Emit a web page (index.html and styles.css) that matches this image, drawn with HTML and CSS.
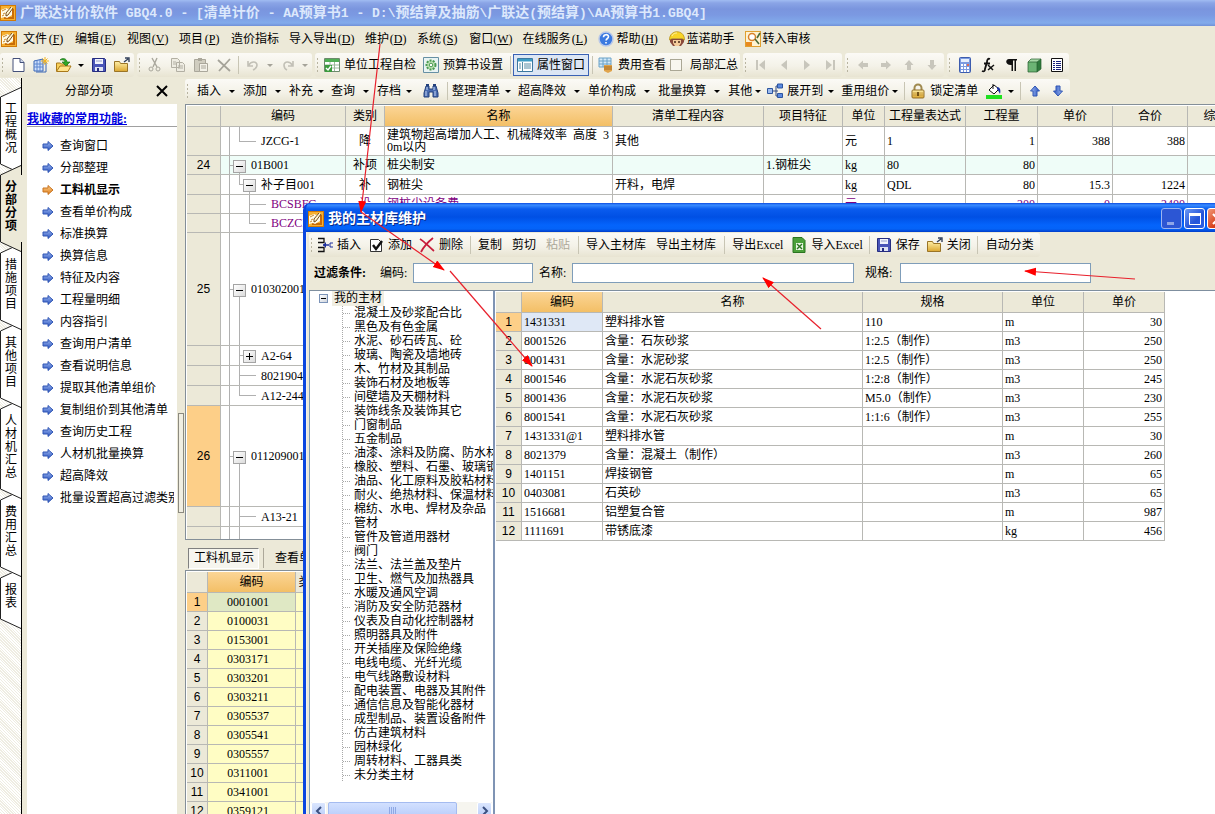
FILE: index.html
```html
<!DOCTYPE html>
<html lang="zh-CN">
<head>
<meta charset="utf-8">
<title>广联达计价软件 GBQ4.0</title>
<link rel="stylesheet" href="styles.css">
</head>
<body>
<svg class="defs" aria-hidden="true">
  <defs>
    <linearGradient id="gBlue" x1="0" y1="0" x2="0" y2="1"><stop offset="0" stop-color="#9db8f0"/><stop offset="1" stop-color="#2c55c0"/></linearGradient>
    <linearGradient id="gOrange" x1="0" y1="0" x2="0" y2="1"><stop offset="0" stop-color="#ffd08a"/><stop offset="1" stop-color="#dd7a1a"/></linearGradient>
    <linearGradient id="gGold" x1="0" y1="0" x2="0" y2="1"><stop offset="0" stop-color="#fff0a8"/><stop offset="1" stop-color="#dba630"/></linearGradient>
  </defs>
  <symbol id="logo" viewBox="0 0 16 16"><rect width="16" height="16" fill="#d07a08"/><rect x="1" y="1" width="14" height="14" fill="#f7b030"/><path d="M12 4h2v10H4v-2h8z" fill="#c86c08"/><path d="M1 5l5-2 2 1 4-2v8l-5 3-2-1-4 1z" fill="#fffbe8"/><path d="M2 6l4-2M3 9l2-1M2 11l2-1" stroke="#c88a30" fill="none"/><path d="M11 2L6 8v3l2-1 5-7" fill="#fff6d0" stroke="#6a3a08" stroke-width=".9"/></symbol>
  <symbol id="new" viewBox="0 0 16 16"><path d="M3 1.500h7l4 4v9H3z" fill="#fff" stroke="#44507a"/><path d="M10 1.500v4h4" fill="#cfd8ee" stroke="#44507a"/></symbol>
  <symbol id="newgrid" viewBox="0 0 16 16"><path d="M1 4l9-2v12H1z" fill="#cfe0fb" stroke="#3b66b5"/><path d="M11 6h2v9H3" fill="none" stroke="#3b66b5"/><path d="M1 7h9M1 10h9M4 3v11M7 3v11" stroke="#5c86cf"/><path d="M12 0v8M8 4h8M9.500 1.500l5 5M14.500 1.500l-5 5" stroke="#f4b41c"/></symbol>
  <symbol id="open" viewBox="0 0 16 16"><path d="M0.500 14V6h4l1 1h6v3" fill="#f7cf5a" stroke="#a8781a"/><path d="M.5 14.500L4 9h11l-3 5.500z" fill="#ffe28a" stroke="#a8781a"/><path d="M4 3c3-3 7-1 7 2h3l-4 4-4-4h3C9 4 7 2 4 3z" fill="#30a828" stroke="#136a12" stroke-width=".6"/></symbol>
  <symbol id="save" viewBox="0 0 16 16"><path d="M1.500 1.500h12l1 1v12h-13z" fill="#4a55b8" stroke="#252c80"/><path d="M4 2h8v5H4z" fill="#f2f4fd"/><path d="M5 4h6" stroke="#9aa2cc"/><path d="M4 10h8v4H4z" fill="#dfe3f3"/><path d="M6 11h2v3H6z" fill="#252c80"/></symbol>
  <symbol id="folder" viewBox="0 0 16 16"><path d="M.5 4.500h5l1 2h7v8H.5z" fill="url(#gGold)" stroke="#9a7426"/><path d="M10 5l4-3M11 1h4v4" stroke="#33415c" fill="none" stroke-width="1.400"/></symbol>
  <symbol id="cut" viewBox="0 0 16 16"><path d="M5 1l5 9M10 1L6 10" stroke="#a9a79c" stroke-width="1.400"/><circle cx="4" cy="12" r="2" fill="none" stroke="#a9a79c"/><circle cx="11" cy="12" r="2" fill="none" stroke="#a9a79c"/></symbol>
  <symbol id="copy" viewBox="0 0 16 16"><path d="M1.500 1.500h6l2 2v7h-8zM6.500 5.500h6l2 2v7h-8z" fill="#eeece2" stroke="#b2afa3"/><path d="M8 9h5M8 11h5M3 5h3M3 7h3" stroke="#b2afa3"/></symbol>
  <symbol id="paste" viewBox="0 0 16 16"><path d="M1.500 2.500h11v12h-11z" fill="#d0cdc0" stroke="#aaa79b"/><path d="M5 1h4v3H5z" fill="#aaa79b"/><path d="M6.500 6.500h8v8h-8z" fill="#f3f1e8" stroke="#aaa79b"/><path d="M8 9h5M8 11h5" stroke="#aaa79b"/></symbol>
  <symbol id="delgray" viewBox="0 0 16 16"><path d="M2 3l12 11M14 2L3 14" stroke="#a5a399" stroke-width="1.800"/></symbol>
  <symbol id="undo" viewBox="0 0 16 16"><path d="M3 4v5h5M3.500 8.500C6 4 12 4 12 8c0 3-2 4-4 5" fill="none" stroke="#c2c0b6" stroke-width="1.600"/></symbol>
  <symbol id="redo" viewBox="0 0 16 16"><path d="M13 4v5H8M12.500 8.500C10 4 4 4 4 8c0 3 1 4 3 5" fill="none" stroke="#c2c0b6" stroke-width="1.600"/></symbol>
  <symbol id="check" viewBox="0 0 16 16"><path d="M.5 1.500h15v13H.5z" fill="#fff" stroke="#6c8a6c"/><path d="M1 2h14v3H1z" fill="#4fae54"/><path d="M6 5v9M10.500 5v9M1 8h14M1 11h14" stroke="#9bb79b"/><path d="M1 8h7v7H1z" fill="#3b9b3e"/><path d="M2 11l2 2 3-4" stroke="#fff" fill="none" stroke-width="1.400"/></symbol>
  <symbol id="gear" viewBox="0 0 16 16"><path d="M.5 .5h15v15H.5z" fill="#e9f3f3" stroke="#6690a4"/><circle cx="8" cy="8" r="4.500" fill="#bfe2b4" stroke="#4a9a52" stroke-width="2" stroke-dasharray="2 1.200"/><circle cx="8" cy="8" r="1.800" fill="#fff" stroke="#4a9a52"/></symbol>
  <symbol id="props" viewBox="0 0 16 16"><path d="M.5 1.500h15v13H.5z" fill="#fff" stroke="#3c78a0"/><path d="M1 2h14v2.500H1z" fill="#3c9cc4"/><path d="M5.500 5v9M2 7h2M2 9h2M2 11h2M7 7h7M7 9h7M7 11h7" stroke="#568ca4"/></symbol>
  <symbol id="fee" viewBox="0 0 16 16"><path d="M1 1h12v9H1z" fill="#d3e9f8" stroke="#6aa2c8"/><path d="M1 4h12M1 7h12M5 1v9M9 1v9" stroke="#6aa2c8"/><path d="M6 8h8v6l-4 2-4-2z" fill="#e0a44c"/><path d="M6 10h8M6 12h8" stroke="#a86c20"/></symbol>
  <symbol id="first" viewBox="0 0 16 16"><path d="M4 3v10" stroke="#c8c6bc" stroke-width="2"/><path d="M12 3v10L6 8z" fill="#c8c6bc"/></symbol>
  <symbol id="prev" viewBox="0 0 16 16"><path d="M11 3v10L5 8z" fill="#c8c6bc"/></symbol>
  <symbol id="next" viewBox="0 0 16 16"><path d="M5 3v10l6-5z" fill="#c8c6bc"/></symbol>
  <symbol id="last" viewBox="0 0 16 16"><path d="M12 3v10" stroke="#c8c6bc" stroke-width="2"/><path d="M4 3v10l6-5z" fill="#c8c6bc"/></symbol>
  <symbol id="arr" viewBox="0 0 16 16"><path d="M3 6h5V3.500l5 4.500-5 4.500V10H3z"/></symbol>
  <symbol id="calc" viewBox="0 0 16 16"><rect x="2.500" y=".5" width="11" height="15" rx="1" fill="#7c9be0" stroke="#3c5cae"/><path d="M4 2h8v3H4z" fill="#e6effc"/><path d="M4 8h8M4 11h8M4 14h8" stroke="#fff" stroke-width="2" stroke-dasharray="2 1"/><path d="M10 8h2" stroke="#e06a50" stroke-width="2"/></symbol>
  <symbol id="fx" viewBox="0 0 16 16"><path d="M10 2c-2-1-3 1-3 3L5 12c0 2-1 3-3 2M4 6.500h6" fill="none" stroke="#111" stroke-width="1.800"/><path d="M8 8l5 5M14 8l-6 5" stroke="#111" stroke-width="1.500"/></symbol>
  <symbol id="para" viewBox="0 0 16 16"><path d="M6 2h8v1.500h-1V14h-1.500V3.500H10V14H8.500V8C2 8.500 2 2 6 2z" fill="#111"/></symbol>
  <symbol id="cube" viewBox="0 0 16 16"><path d="M2 5h9v10H2z" fill="#6cb474"/><path d="M2 5l3-3h10l-4 3z" fill="#a6d8a6"/><path d="M11 5l4-3v10l-4 3z" fill="#2f7a3c"/><path d="M2 5l3-3h10v10l-4 3H2zM2 5h9v10M11 5l4-3" fill="none" stroke="#235c2c" stroke-width=".7"/></symbol>
  <symbol id="list" viewBox="0 0 16 16"><path d="M2.500 1.500h11v13h-11z" fill="#fff" stroke="#111"/><path d="M4 4.500h2M7 4.500h5M4 6.500h2M7 6.500h5M4 8.500h2M7 8.500h5M4 10.500h2M7 10.500h5M4 12.500h2M7 12.500h5" stroke="#1a237e"/></symbol>
  <symbol id="bino" viewBox="0 0 16 16"><path d="M3 3h3v3h4V3h3l2 7v4h-5v-5H6v5H1v-4z" fill="#4a6cb0" stroke="#23407c"/><path d="M3 8v5M12 8v5M4 4v3M11 4v3" stroke="#c4d4f2"/><path d="M3 1h3v2H3zM10 1h3v2h-3z" fill="#23407c"/></symbol>
  <symbol id="tree" viewBox="0 0 16 16"><path d="M6 8h3M9 3v10M9 3h2M9 13h2M9 8h2" stroke="#334a80" fill="none"/><path d="M.5 5.500h5v5h-5z" fill="#9dbbee" stroke="#2c55a0"/><path d="M10.500 1h5v4h-5zM10.500 10.500h5v4h-5z" fill="#5c8ae0" stroke="#2c55a0"/></symbol>
  <symbol id="lock" viewBox="0 0 16 16"><path d="M4.500 8V5a3.500 3.500 0 0 1 7 0v3" fill="none" stroke="#a08a50" stroke-width="2"/><rect x="2" y="7" width="12" height="8" rx="1" fill="url(#gGold)" stroke="#94702a"/><path d="M3 10h10M3 12h10" stroke="#b8862a" stroke-width=".7"/><path d="M8 9v4" stroke="#5a3a08" stroke-width="1.600"/></symbol>
  <symbol id="bucket" viewBox="0 0 16 16"><path d="M3 7l5-5 5 4-5 5z" fill="#fff" stroke="#111"/><path d="M7 1v5" stroke="#111"/><path d="M11 4c3 0 4 3 3 7-1-2-2-4-3-5z" fill="#1a2f9e"/><path d="M0 12h16v4H0z" fill="#1fe01f"/></symbol>
  <symbol id="help" viewBox="0 0 16 16"><circle cx="8" cy="8" r="7" fill="#3c7ae0" stroke="#b9c8e8" stroke-width="1.500"/><path d="M5.500 6.200c0-3.400 5-3.200 5-.4 0 1.800-2.400 1.600-2.400 3.700M8 11v1.500" fill="none" stroke="#fff" stroke-width="1.600"/></symbol>
  <symbol id="face" viewBox="0 0 16 16"><path d="M1 8h14v3l-3 4H4l-3-4z" fill="#8a4a3c"/><path d="M4 9h8v3l-2 3H6l-2-3z" fill="#f4cc9c"/><path d="M6 10v2M10 10v2" stroke="#3a1a10" stroke-width="1.400"/><path d="M.5 9C0-2 16-2 15.500 9L13 7.500H3z" fill="#f8d428" stroke="#b08a10" stroke-width=".7"/><path d="M3 5c1-3 4-3 5-3" stroke="#fff4a8" fill="none"/></symbol>
  <symbol id="audit" viewBox="0 0 16 16"><rect x=".5" y=".5" width="15" height="15" fill="#fff3d2" stroke="#e0a030"/><path d="M1 11h6v4H1z" fill="#e88a20"/><circle cx="7" cy="6" r="3.500" fill="#fff" stroke="#d8822c" stroke-width="1.500"/><path d="M10 8l4 5M15 2l-3 5" stroke="#4a6a3a" stroke-width="1.600"/></symbol>
  <symbol id="insert" viewBox="0 0 16 16"><path d="M1 1.500h6v4H1M1 10.500h6v4H1" fill="none" stroke="#111" stroke-width="1.300"/><path d="M6 8h6" stroke="#1c2f9e" stroke-width="1.500"/><path d="M9 5v6L6 8z" fill="#1c2f9e"/><path d="M16 6h-3v4h3" fill="none" stroke="#1c2f9e"/></symbol>
  <symbol id="tick" viewBox="0 0 16 16"><path d="M2.500 2.500h8l3 3v9h-11z" fill="#fff" stroke="#333"/><path d="M5 8l3 4 6-8" fill="none" stroke="#111" stroke-width="2.400"/></symbol>
  <symbol id="del" viewBox="0 0 16 16"><path d="M1 2c5 3 9 8 14 12M14 1C9 5 5 9 2 15" fill="none" stroke="#c81e3c" stroke-width="1.800"/></symbol>
  <symbol id="excel" viewBox="0 0 16 16"><path d="M2 .5h9l3 3v12H2z" fill="#4ba03a" stroke="#2a7420"/><path d="M5 6h7v7H5z" fill="#eaf6e4"/><path d="M6 7l5 5M11 7l-5 5" stroke="#2a7420" stroke-width="1.400"/></symbol>
  <symbol id="tabtop" viewBox="0 0 22 10"><path d="M0 10L21 0v10z"/><path d="M.5 10L21 .5" fill="none" stroke="#222"/></symbol>
  <symbol id="tabbot" viewBox="0 0 22 10"><path d="M0 0h21v10z"/><path d="M.5 0L21 9.500" fill="none" stroke="#222"/></symbol>
</svg>

<div class="app">
  <header class="titlebar"><svg class="ic"><use href="#logo"/></svg><h1>广联达计价软件<i> GBQ4.0 - [</i>清单计价<i> - AA</i>预算书<i>1 - D:\</i>预结算及抽筋<i>\</i>广联达<i>(</i>预结算<i>)\AA</i>预算书<i>1.GBQ4]</i></h1></header>

  <nav class="menubar">
    <svg class="ic"><use href="#logo"/></svg>
    <button>文件<span class="key">(<u>F</u>)</span></button><button>编辑<span class="key">(<u>E</u>)</span></button><button>视图<span class="key">(<u>V</u>)</span></button><button>项目<span class="key">(<u>P</u>)</span></button><button>造价指标</button><button>导入导出<span class="key">(<u>D</u>)</span></button><button>维护<span class="key">(<u>D</u>)</span></button><button>系统<span class="key">(<u>S</u>)</span></button><button>窗口<span class="key">(<u>W</u>)</span></button><button>在线服务<span class="key">(<u>L</u>)</span></button><button><svg class="ic"><use href="#help"/></svg>帮助<span class="key">(<u>H</u>)</span></button><button><svg class="ic"><use href="#face"/></svg>蓝诺助手</button><button><svg class="ic"><use href="#audit"/></svg>转入审核</button>
  </nav>

  <div class="tools">
    <div class="band"><span class="grip"></span><button class="tb" aria-label="新建"><svg class="ic"><use href="#new"/></svg></button><button class="tb" aria-label="新建表"><svg class="ic"><use href="#newgrid"/></svg></button><button class="tb" aria-label="打开"><svg class="ic"><use href="#open"/></svg></button><span class="caret"></span><button class="tb" aria-label="保存"><svg class="ic"><use href="#save"/></svg></button><button class="tb" aria-label="关闭工程"><svg class="ic"><use href="#folder"/></svg></button></div>
    <div class="band"><span class="grip"></span><button class="tb" aria-label="剪切"><svg class="ic"><use href="#cut"/></svg></button><button class="tb" aria-label="复制"><svg class="ic"><use href="#copy"/></svg></button><button class="tb" aria-label="粘贴"><svg class="ic"><use href="#paste"/></svg></button><button class="tb" aria-label="删除"><svg class="ic"><use href="#delgray"/></svg></button><span class="sep"></span><button class="tb" aria-label="撤销"><svg class="ic"><use href="#undo"/></svg></button><span class="caret dim"></span><button class="tb" aria-label="恢复"><svg class="ic"><use href="#redo"/></svg></button><span class="caret dim"></span></div>
    <div class="band"><span class="grip"></span><button class="tb label"><svg class="ic"><use href="#check"/></svg>单位工程自检</button><button class="tb label"><svg class="ic"><use href="#gear"/></svg>预算书设置</button><span class="sep"></span><button class="tb label pressed"><svg class="ic"><use href="#props"/></svg>属性窗口</button><span class="sep"></span><button class="tb label"><svg class="ic"><use href="#fee"/></svg>费用查看</button><label class="tick"><input type="checkbox">局部汇总</label></div>
    <div class="band"><span class="grip"></span><button class="tb" aria-label="首项"><svg class="ic"><use href="#first"/></svg></button><button class="tb" aria-label="上一项"><svg class="ic"><use href="#prev"/></svg></button><button class="tb" aria-label="下一项"><svg class="ic"><use href="#next"/></svg></button><button class="tb" aria-label="末项"><svg class="ic"><use href="#last"/></svg></button></div>
    <div class="band"><span class="grip"></span><button class="tb" aria-label="左移"><svg class="ic gray left"><use href="#arr"/></svg></button><button class="tb" aria-label="右移"><svg class="ic gray"><use href="#arr"/></svg></button><button class="tb" aria-label="上移"><svg class="ic gray up"><use href="#arr"/></svg></button><button class="tb" aria-label="下移"><svg class="ic gray down"><use href="#arr"/></svg></button></div>
    <div class="band"><span class="grip"></span><button class="tb" aria-label="计算器"><svg class="ic"><use href="#calc"/></svg></button><button class="tb" aria-label="函数"><svg class="ic"><use href="#fx"/></svg></button><button class="tb" aria-label="特殊符号"><svg class="ic"><use href="#para"/></svg></button><button class="tb" aria-label="图元"><svg class="ic"><use href="#cube"/></svg></button><button class="tb" aria-label="列表"><svg class="ic"><use href="#list"/></svg></button></div>
  </div>

  <div class="workspace">
    <div class="tabs">
      <button class="tab"><svg><use href="#tabtop"/></svg><span>工程概况</span><svg><use href="#tabbot"/></svg></button>
      <button class="tab on"><svg><use href="#tabtop"/></svg><span>分部分项</span><svg><use href="#tabbot"/></svg></button>
      <button class="tab z5"><svg><use href="#tabtop"/></svg><span>措施项目</span><svg><use href="#tabbot"/></svg></button>
      <button class="tab z4"><svg><use href="#tabtop"/></svg><span>其他项目</span><svg><use href="#tabbot"/></svg></button>
      <button class="tab z3"><svg><use href="#tabtop"/></svg><span>人材机汇总</span><svg><use href="#tabbot"/></svg></button>
      <button class="tab z2"><svg><use href="#tabtop"/></svg><span>费用汇总</span><svg><use href="#tabbot"/></svg></button>
      <button class="tab"><svg><use href="#tabtop"/></svg><span>报表</span><svg><use href="#tabbot"/></svg></button>
    </div>

    <aside class="side">
      <div class="side-head"><h2>分部分项</h2><button aria-label="关闭面板"><svg viewBox="0 0 12 12"><path d="M1 1l10 10M11 1L1 11" stroke="#000" stroke-width="2"/></svg></button></div>
      <div class="side-body">
        <h3><a href="#fav">我收藏的常用功能:</a></h3>
        <ul>
          <li><svg class="ic blue"><use href="#arr"/></svg>查询窗口</li>
          <li><svg class="ic blue"><use href="#arr"/></svg>分部整理</li>
          <li class="cur"><svg class="ic orange"><use href="#arr"/></svg>工料机显示</li>
          <li><svg class="ic blue"><use href="#arr"/></svg>查看单价构成</li>
          <li><svg class="ic blue"><use href="#arr"/></svg>标准换算</li>
          <li><svg class="ic blue"><use href="#arr"/></svg>换算信息</li>
          <li><svg class="ic blue"><use href="#arr"/></svg>特征及内容</li>
          <li><svg class="ic blue"><use href="#arr"/></svg>工程量明细</li>
          <li><svg class="ic blue"><use href="#arr"/></svg>内容指引</li>
          <li><svg class="ic blue"><use href="#arr"/></svg>查询用户清单</li>
          <li><svg class="ic blue"><use href="#arr"/></svg>查看说明信息</li>
          <li><svg class="ic blue"><use href="#arr"/></svg>提取其他清单组价</li>
          <li><svg class="ic blue"><use href="#arr"/></svg>复制组价到其他清单</li>
          <li><svg class="ic blue"><use href="#arr"/></svg>查询历史工程</li>
          <li><svg class="ic blue"><use href="#arr"/></svg>人材机批量换算</li>
          <li><svg class="ic blue"><use href="#arr"/></svg>超高降效</li>
          <li><svg class="ic blue"><use href="#arr"/></svg>批量设置超高过滤类别</li>
        </ul>
      </div>
    </aside>
    <div class="splitter"><span></span></div>

    <main class="content">
      <div class="tools second"><div class="band"><span class="grip"></span><button class="dd">插入<span class="caret wide"></span></button><button class="dd">添加<span class="caret wide"></span></button><button class="dd">补充<span class="caret mid"></span></button><button class="dd">查询<span class="caret wide"></span></button><button class="dd">存档<span class="caret mid"></span></button><button class="tb" aria-label="查找"><svg class="ic"><use href="#bino"/></svg></button><span class="sep big"></span><button class="dd">整理清单<span class="caret mid"></span></button><button class="dd">超高降效<span class="caret wide"></span></button><button class="dd">单价构成<span class="caret wide"></span></button><button class="dd">批量换算<span class="caret wide"></span></button><button class="dd">其他<span class="caret"></span></button><button class="dd"><svg class="ic"><use href="#tree"/></svg>展开到<span class="caret mid"></span></button><button class="dd">重用组价<span class="caret"></span></button><span class="sep"></span><button class="tb label"><svg class="ic"><use href="#lock"/></svg>锁定清单</button><button class="tb" aria-label="填充颜色"><svg class="ic"><use href="#bucket"/></svg></button><span class="caret"></span><span class="sep"></span><button class="tb" aria-label="上移行"><svg class="ic blue up"><use href="#arr"/></svg></button><button class="tb" aria-label="下移行"><svg class="ic blue down"><use href="#arr"/></svg></button></div></div>

      <div class="gridbox upper">
        <table class="grid bill">
          <colgroup><col class="w34"><col class="w125"><col class="w39"><col class="w228"><col class="w151"><col class="w79"><col class="w42"><col class="w81"><col class="w72"><col class="w75"><col class="w75"><col class="w80"></colgroup>
          <thead><tr><th></th><th>编码</th><th>类别</th><th class="hot">名称</th><th>清单工程内容</th><th>项目特征</th><th>单位</th><th>工程量表达式</th><th>工程量</th><th>单价</th><th>合价</th><th>综合单价</th></tr></thead>
          <tbody>
            <tr class="h29"><th></th><td class="n l1 leaf end">JZCG-1</td><td class="c">降</td><td class="two">建筑物超高增加人工、机械降效率&ensp;高度&ensp;3<br>0m以内</td><td>其他</td><td></td><td>元</td><td>1</td><td class="r">1</td><td class="r">388</td><td class="r">388</td><td></td></tr>
            <tr class="mint"><th>24</th><td class="n l0"><span class="box"></span>01B001</td><td class="c">补项</td><td>桩尖制安</td><td></td><td>1.钢桩尖</td><td>kg</td><td>80</td><td class="r">80</td><td></td><td></td><td></td></tr>
            <tr class="h20"><th></th><td class="n l1 open"><span class="box"></span>补子目001</td><td class="c">补</td><td>钢桩尖</td><td>开料，电焊</td><td></td><td>kg</td><td>QDL</td><td class="r">80</td><td class="r">15.3</td><td class="r">1224</td><td></td></tr>
            <tr class="purple"><th></th><td class="n l2">BCSBFC</td><td class="c">设</td><td>钢桩尖设备费</td><td></td><td></td><td>元</td><td></td><td class="r">200</td><td class="r">0</td><td class="r">2400</td><td></td></tr>
            <tr class="purple"><th></th><td class="n l2 end">BCZCFC</td><td></td><td></td><td></td><td></td><td></td><td></td><td></td><td></td><td></td><td></td></tr>
            <tr class="h113"><th>25</th><td class="n l0"><span class="box"></span>010302001</td><td></td><td></td><td></td><td></td><td></td><td></td><td></td><td></td><td></td><td></td></tr>
            <tr class="h20"><th></th><td class="n l1"><span class="box plus"></span>A2-64</td><td></td><td></td><td></td><td></td><td></td><td></td><td></td><td></td><td></td><td></td></tr>
            <tr class="h20"><th></th><td class="n l1 leaf">8021904</td><td></td><td></td><td></td><td></td><td></td><td></td><td></td><td></td><td></td><td></td></tr>
            <tr class="h20"><th></th><td class="n l1 leaf end">A12-244</td><td></td><td></td><td></td><td></td><td></td><td></td><td></td><td></td><td></td><td></td></tr>
            <tr class="h101 sel"><th>26</th><td class="n l0"><span class="box"></span>011209001</td><td></td><td></td><td></td><td></td><td></td><td></td><td></td><td></td><td></td><td></td></tr>
            <tr class="h20"><th></th><td class="n l1 leaf">A13-21</td><td></td><td></td><td></td><td></td><td></td><td></td><td></td><td></td><td></td><td></td></tr>
            <tr class="h29"><th></th><td class="n l1 leaf"></td><td></td><td></td><td></td><td></td><td></td><td></td><td></td><td></td><td></td><td></td></tr>
          </tbody>
        </table>
      </div>

      <div class="subtabs"><button class="on">工料机显示</button><span class="bar"></span><button>查看单价构成</button></div>

      <div class="gridbox lower">
        <table class="grid res">
          <colgroup><col class="w21"><col class="w88"><col class="w30"><col></colgroup>
          <thead><tr><th></th><th class="hot">编码</th><th>类别</th><th>名称</th></tr></thead>
          <tbody>
            <tr class="sel"><th>1</th><td>0001001</td><td></td><td></td></tr>
            <tr><th>2</th><td>0100031</td><td></td><td></td></tr>
            <tr><th>3</th><td>0153001</td><td></td><td></td></tr>
            <tr><th>4</th><td>0303171</td><td></td><td></td></tr>
            <tr><th>5</th><td>0303201</td><td></td><td></td></tr>
            <tr><th>6</th><td>0303211</td><td></td><td></td></tr>
            <tr><th>7</th><td>0305537</td><td></td><td></td></tr>
            <tr><th>8</th><td>0305541</td><td></td><td></td></tr>
            <tr><th>9</th><td>0305557</td><td></td><td></td></tr>
            <tr><th>10</th><td>0311001</td><td></td><td></td></tr>
            <tr><th>11</th><td>0341001</td><td></td><td></td></tr>
            <tr><th>12</th><td>0359121</td><td></td><td></td></tr>
          </tbody>
        </table>
      </div>
    </main>
  </div>
</div>

<section class="dialog" role="dialog" aria-labelledby="dlg-title">
  <div class="dlg-title"><svg class="ic"><use href="#logo"/></svg><h2 id="dlg-title">我的主材库维护</h2>
    <div class="winbtns"><button aria-label="最小化" disabled><svg viewBox="0 0 16 16"><path d="M3 11h7v3H3z" fill="#8fa6e8"/></svg></button><button aria-label="最大化"><svg viewBox="0 0 16 16"><path d="M2.500 3.500h11v10h-11z" fill="none" stroke="#fff"/><path d="M2 2h12v3H2z" fill="#fff"/></svg></button><button class="close" aria-label="关闭窗口"><svg viewBox="0 0 16 16"><path d="M3 3l10 10M13 3L3 13" stroke="#fff" stroke-width="2.200"/></svg></button></div>
  </div>
  <div class="dlg-body">
    <div class="tools"><div class="band"><span class="grip"></span><button class="tb label"><svg class="ic"><use href="#insert"/></svg>插入</button><button class="tb label"><svg class="ic"><use href="#tick"/></svg>添加</button><button class="tb label"><svg class="ic"><use href="#del"/></svg>删除</button><span class="sep"></span><button class="txt">复制</button><button class="txt">剪切</button><button class="txt" disabled>粘贴</button><span class="sep"></span><button class="txt">导入主材库</button><button class="txt">导出主材库</button><span class="sep"></span><button class="txt">导出Excel</button><button class="tb label"><svg class="ic"><use href="#excel"/></svg>导入Excel</button><span class="sep"></span><button class="tb label"><svg class="ic"><use href="#save"/></svg>保存</button><button class="tb label"><svg class="ic"><use href="#folder"/></svg>关闭</button><span class="sep"></span><button class="txt">自动分类</button></div></div>
    <form class="filter"><b>过滤条件:</b><label for="f-code">编码:</label><input id="f-code" class="f1" type="text" autofocus><label for="f-name">名称:</label><input id="f-name" class="f2" type="text"><label for="f-spec">规格:</label><input id="f-spec" class="f3" type="text"></form>
    <div class="panes">
      <div class="treepane">
        <div class="root"><span class="tbox"></span><span class="rootlabel">我的主材</span></div>
        <ul>
          <li>混凝土及砂浆配合比</li><li>黑色及有色金属</li><li>水泥、砂石砖瓦、砼</li><li>玻璃、陶瓷及墙地砖</li><li>木、竹材及其制品</li><li>装饰石材及地板等</li><li>间壁墙及天棚材料</li><li>装饰线条及装饰其它</li><li>门窗制品</li><li>五金制品</li><li>油漆、涂料及防腐、防水材料</li><li>橡胶、塑料、石墨、玻璃钢</li><li>油品、化工原料及胶粘材料</li><li>耐火、绝热材料、保温材料</li><li>棉纺、水电、焊材及杂品</li><li>管材</li><li>管件及管道用器材</li><li>阀门</li><li>法兰、法兰盖及垫片</li><li>卫生、燃气及加热器具</li><li>水暖及通风空调</li><li>消防及安全防范器材</li><li>仪表及自动化控制器材</li><li>照明器具及附件</li><li>开关插座及保险绝缘</li><li>电线电缆、光纤光缆</li><li>电气线路敷设材料</li><li>配电装置、电器及其附件</li><li>通信信息及智能化器材</li><li>成型制品、装置设备附件</li><li>仿古建筑材料</li><li>园林绿化</li><li>周转材料、工器具类</li><li>未分类主材</li>
        </ul>
        <div class="hscroll"><button aria-label="向左滚动"><svg viewBox="0 0 10 10"><path d="M7 1L3 5l4 4" fill="none" stroke="#3c5080" stroke-width="2"/></svg></button><span class="thumb"><i></i><i></i><i></i><i></i></span><button aria-label="向右滚动"><svg viewBox="0 0 10 10"><path d="M3 1l4 4-4 4" fill="none" stroke="#3c5080" stroke-width="2"/></svg></button></div>
      </div>
      <div class="matpane">
        <table class="grid mat">
          <colgroup><col class="w26"><col class="w81"><col class="w260"><col class="w140"><col class="w81"><col class="w81"></colgroup>
          <thead><tr><th></th><th class="hot">编码</th><th>名称</th><th>规格</th><th>单位</th><th>单价</th></tr></thead>
          <tbody>
            <tr class="sel"><th>1</th><td>1431331</td><td>塑料排水管</td><td>110</td><td>m</td><td class="r">30</td></tr>
            <tr><th>2</th><td>8001526</td><td>含量：石灰砂浆</td><td>1:2.5（制作）</td><td>m3</td><td class="r">250</td></tr>
            <tr><th>3</th><td>8001431</td><td>含量：水泥砂浆</td><td>1:2.5（制作）</td><td>m3</td><td class="r">250</td></tr>
            <tr><th>4</th><td>8001546</td><td>含量：水泥石灰砂浆</td><td>1:2:8（制作）</td><td>m3</td><td class="r">245</td></tr>
            <tr><th>5</th><td>8001436</td><td>含量：水泥石灰砂浆</td><td>M5.0（制作）</td><td>m3</td><td class="r">230</td></tr>
            <tr><th>6</th><td>8001541</td><td>含量：水泥石灰砂浆</td><td>1:1:6（制作）</td><td>m3</td><td class="r">255</td></tr>
            <tr><th>7</th><td>1431331@1</td><td>塑料排水管</td><td></td><td>m</td><td class="r">30</td></tr>
            <tr><th>8</th><td>8021379</td><td>含量：混凝土（制作）</td><td></td><td>m3</td><td class="r">260</td></tr>
            <tr><th>9</th><td>1401151</td><td>焊接钢管</td><td></td><td>m</td><td class="r">65</td></tr>
            <tr><th>10</th><td>0403081</td><td>石英砂</td><td></td><td>m3</td><td class="r">65</td></tr>
            <tr><th>11</th><td>1516681</td><td>铝塑复合管</td><td></td><td>m</td><td class="r">987</td></tr>
            <tr><th>12</th><td>1111691</td><td>带锈底漆</td><td></td><td>kg</td><td class="r">456</td></tr>
          </tbody>
        </table>
      </div>
    </div>
  </div>
</section>

<svg class="marks" width="1215" height="814" aria-hidden="true">
  <defs><marker id="head" markerUnits="userSpaceOnUse" markerWidth="14" markerHeight="10" refX="11" refY="4" orient="auto"><path d="M0 0l12 4-12 4z" fill="#f00"/></marker></defs>
  <g stroke="#e8202c" stroke-width="1.200" fill="none" marker-end="url(#head)"><path d="M380 44L361 212"/><path d="M361 212L444 270"/><path d="M450 271L532 366"/><path d="M821 329L763 278"/><path d="M1135 279L1025 271"/></g>
</svg>
</body>
</html>
```
FILE: styles.css
```css
* { box-sizing: border-box; }
html, body { height: 100%; }
body {
  margin: 0;
  overflow: hidden;
  position: relative;
  background: #ece9d8;
  color: #000;
  font: 12px/16px "Liberation Serif", "Noto Sans CJK SC", sans-serif;
}
h1, h2, h3, ul { margin: 0; padding: 0; font-size: 12px; font-weight: normal; }
ul { list-style: none; }
button {
  display: flex; align-items: center; flex: none;
  margin: 0; padding: 0; border: 0;
  background: none; color: inherit; font: inherit; white-space: nowrap;
}
.defs { position: absolute; width: 0; height: 0; }
.ic { width: 16px; height: 16px; flex: none; display: block; }
.gray { fill: #c8c6bc; }
.blue { fill: url(#gBlue); stroke: #2f55b4; stroke-width: 1px; }
.orange { fill: url(#gOrange); stroke: #c87420; stroke-width: 1px; }
.left { transform: rotate(180deg); }
.up { transform: rotate(-90deg); }
.down { transform: rotate(90deg); }

.app { display: flex; flex-direction: column; height: 100%; }

.titlebar {
  display: flex; align-items: center; gap: 4px; flex: none; height: 26px;
  background: linear-gradient(#a0bcf2 0, #8aa4e6 3px, #7a95de 9px, #7b99e2 15px, #82abeb 23px, #7090d8 26px);
}
.titlebar h1 { color: #dce8fc; font-size: 14px; font-weight: bold; white-space: pre; }
.titlebar i { font: bold 13px "Liberation Mono", monospace; }

.menubar { display: flex; align-items: center; gap: 10px; flex: none; height: 26px; padding-left: 1px; }
.menubar > .ic { margin-right: -4px; }
.menubar button { height: 20px; }
.menubar button .ic { margin-right: 2px; }
.key { display: inline-block; min-width: 18px; text-align: center; }

.tools { display: flex; flex: none; gap: 3px; height: 26px; padding: 1px 0; }
.band {
  display: flex; align-items: center; flex: none; padding-right: 1px;
  border-radius: 3px;
  background: linear-gradient(#fbfaf6, #f4f2e8 55%, #e8e4d2);
}
.grip { width: 6px; height: 16px; background: radial-gradient(circle, #b8b4a0 1px, transparent 1px) 0 0 / 5px 4px repeat-y; }
.second .grip { width: 12px; }
.tb { justify-content: center; width: 23px; height: 22px; }
.tb.label { width: auto; padding: 0 4px 0 3px; gap: 4px; }
.tb.pressed { padding: 0 3px 0 3px; border: 1px solid #3a62b4; background: #dce6f4; }
.txt { height: 22px; padding: 0 5px; }
button:disabled { color: #aca899; }
.dd { height: 22px; }
.dd .ic { margin: 0 4px 0 3px; }
.caret { display: flex; justify-content: center; flex: none; width: 12px; }
.caret::before { content: ""; border: 3px solid transparent; border-top-color: #000; border-bottom: 0; }
.caret.dim::before { border-top-color: #a5a399; }
.caret.wide { width: 22px; }
.caret.mid { width: 18px; padding-right: 3px; }
.sep { width: 6px; height: 18px; flex: none; background: linear-gradient(#c8c5b4, #c8c5b4) center / 1px 100% no-repeat; }
.sep.big { width: 10px; }
.tick { display: flex; align-items: center; gap: 8px; padding-right: 1px; }
.tick input { appearance: none; width: 12px; height: 12px; margin: 0; border: 1px solid #aaa795; background: #f8f7f0; }

.workspace { display: flex; flex: 1; min-height: 0; }

.tabs {
  display: flex; flex-direction: column; flex: none; width: 22px; padding-top: 9px;
  border-right: 1px solid #000;
  background: repeating-linear-gradient(45deg, #fff 0 1px, #efede2 1px 2px);
}
.tab { position: relative; display: flex; flex-direction: column; width: 22px; margin-bottom: -9px; fill: #fff; }
.tab svg { display: block; width: 22px; height: 10px; flex: none; }
.tab span {
  display: block; width: 22px; padding: 6px 4px 9px 4px;
  border-left: 1px solid #222; border-right: 1px solid #000;
  background: #fff; line-height: 13px; white-space: normal; word-break: break-all;
}
.tab.on { z-index: 10; fill: #ece9d8; font-weight: bold; }
.tab.on span { background: #ece9d8; border-right-color: #ece9d8; }
.z5 { z-index: 5; }
.z4 { z-index: 4; }
.z3 { z-index: 3; }
.z2 { z-index: 2; }

.side { display: flex; flex-direction: column; flex: none; width: 155px; padding-left: 5px; }
.side-head { display: flex; align-items: center; flex: none; height: 26px; padding-right: 9px; }
.side-head h2 { flex: 1; padding-left: 38px; }
.side-head svg { width: 12px; height: 12px; }
.side-body { flex: 1; overflow: hidden; background: #fff; }
.side-body h3 { padding: 7px 0 0; height: 23px; border-bottom: 1px solid #a0a0a0; line-height: 16px; font-weight: bold; white-space: nowrap; }
.side-body a { color: #0000e0; }
.side-body ul { padding: 8px 3px 0 13px; }
.side-body li { display: flex; align-items: center; gap: 4px; height: 22px; overflow: hidden; white-space: nowrap; }
.cur { font-weight: bold; }

.splitter { display: flex; flex: none; width: 8px; padding: 335px 1px 0; }
.splitter span { width: 6px; height: 100px; border: 1px solid #8c8a80; background: #f0eee2; }

.content { display: flex; flex-direction: column; flex: 1; min-width: 0; }
.gridbox { overflow: hidden; border: 1px solid #848f98; border-right: 0; padding: 1px 0 0 1px; }
.upper { flex: none; height: 436px; background: #fff; }
.lower { flex: 1; min-height: 0; border-bottom: 0; background: #fff; }

.grid { table-layout: fixed; border-collapse: separate; border-spacing: 0; }
.grid th, .grid td {
  height: 19px; padding: 0 2px; overflow: hidden;
  border-right: 1px solid #b8b8b4; border-bottom: 1px solid #b8b8b4;
  line-height: 16px; white-space: nowrap; font-weight: normal;
}
.grid thead th { height: 21px; background: #ece9d8; }
.grid thead th.hot { background: linear-gradient(#fbd596, #f3bf66); }
.grid tbody th { background: #ece9d8; font-family: "Liberation Sans", sans-serif; }
.grid .c { text-align: center; }
.grid .r { text-align: right; }
.grid .sel th { background: #fdcf88; }
.bill { width: 100%; min-width: 1081px; }
.bill .two { line-height: 12px; }
.h20 td { height: 20px; }
.h29 td { height: 29px; }
.h113 td { height: 113px; }
.h101 td { height: 101px; }
.mint td { background-color: #effdf8; }
.purple td { color: #800080; }

/* tree guides in the code column, drawn as background lines per level */
.grid .n { --g: linear-gradient(#b0b0b0, #b0b0b0); --h: 100%; background-image: var(--g), var(--g), var(--g), var(--g); background-repeat: no-repeat; }
.grid .end { --h: 50%; }
.grid .l0 { padding-left: 12px; background-size: 1px 100%, 5px 1px, 1px 50%, 0 0; background-position: 8px 0, 8px 50%, 18px 100%, 0 0; }
.grid .l1 { padding-left: 22px; background-size: 1px 100%, 1px var(--h), 5px 1px, 0 0; background-position: 8px 0, 18px 0, 18px 50%, 28px 100%; }
.grid .l1.open { --h: 50%; background-size: 1px 100%, 1px var(--h), 5px 1px, 1px 50%; }
.grid .l1.leaf { padding-left: 40px; background-size: 1px 100%, 1px var(--h), 17px 1px, 0 0; }
.grid .l1.leaf:empty { background-size: 1px 100%, 1px 100%, 0 0, 0 0; }
.grid .l2 { padding-left: 50px; background-size: 1px 100%, 1px var(--h), 17px 1px, 0 0; background-position: 8px 0, 28px 0, 28px 50%, 0 0; }
.box {
  display: inline-block; width: 13px; height: 13px; margin-right: 5px; vertical-align: middle;
  border: 1px solid #a4a4a4;
  background: linear-gradient(#000, #000) center / 7px 1px no-repeat, linear-gradient(135deg, #fff, #dcdcdc);
}
.box.plus { background: linear-gradient(#000, #000) center / 7px 1px no-repeat, linear-gradient(#000, #000) center / 1px 7px no-repeat, linear-gradient(135deg, #fff, #dcdcdc); }

.subtabs { display: flex; align-items: center; flex: none; height: 30px; padding: 7px 0 1px 3px; }
.subtabs button { height: 21px; padding: 0 4px 0 11px; }
.subtabs .on { width: 71px; padding: 0 4px 0 5px; border: 1px solid #fff; border-top: 1px solid #808080; border-left: 1px solid #808080; background: #f6f5ee; }
.bar { width: 1px; height: 20px; margin-left: 4px; background: #aca899; }

.res { width: 100%; }
.res td { text-align: center; background: #fffdc4; }
.res td:nth-child(2) { padding-right: 9px; }
.res .sel td:nth-child(2) { background: #dfe8c4; }

.w21 { width: 21px; } .w26 { width: 26px; } .w30 { width: 30px; } .w34 { width: 34px; } .w39 { width: 39px; }
.w42 { width: 42px; } .w72 { width: 72px; } .w75 { width: 75px; } .w79 { width: 79px; } .w80 { width: 80px; }
.w81 { width: 81px; } .w88 { width: 88px; } .w125 { width: 125px; } .w140 { width: 140px; }
.w151 { width: 151px; } .w228 { width: 228px; } .w260 { width: 260px; }

.dialog {
  position: absolute; left: 303px; top: 203px; right: -18px; bottom: 0; z-index: 20;
  display: flex; flex-direction: column;
  border-left: 3px solid #0a46e0; border-radius: 7px 0 0 0; overflow: hidden;
  background: #0a46e0;
}
.dlg-title {
  display: flex; align-items: center; gap: 4px; flex: none; height: 29px; padding: 2px 5px 0 2px;
  background: linear-gradient(#0a4ae0 0, #3a8cff 2px, #0a5cee 6px, #0050e4 14px, #0464fc 22px, #0463f8 26px, #003cc8 29px);
}
.dlg-title h2 { flex: 1; color: #fff; font-size: 14px; font-weight: bold; text-shadow: 1px 1px #0a2a88; }
.winbtns { display: flex; gap: 2px; }
.winbtns button { justify-content: center; width: 21px; height: 21px; border: 1px solid #fff; border-radius: 3px; background: linear-gradient(135deg, #6c98f4, #2454d8 60%, #2a62e8); }
.winbtns button:disabled { border-color: #9cb4f0; background: #2c56d4; }
.winbtns .close { background: linear-gradient(135deg, #f09878, #d8401c 60%, #c83414); }
.winbtns svg { width: 16px; height: 16px; }
.dlg-body { display: flex; flex-direction: column; flex: 1; min-height: 0; padding-left: 2px; background: #ece9d8; border-left: 1px solid #f4f2e8; }
.dlg-body .grip { width: 5px; }

.filter { display: flex; align-items: center; flex: none; height: 32px; padding: 0 0 2px 5px; }
.filter b { width: 66px; }
.filter label { width: 33px; }
.filter input { height: 20px; margin-right: 6px; padding: 0 2px; border: 1px solid #7f9db9; background: #fff; font: inherit; outline: 0; }
.filter .f1 { width: 120px; }
.filter .f2 { width: 282px; margin-right: 11px; }
.filter .f3 { width: 191px; margin-left: 2px; }

.panes { display: flex; flex: 1; min-height: 0; border-top: 1px solid #7f8f9f; }
.treepane { display: flex; flex-direction: column; flex: none; width: 186px; overflow: hidden; border-left: 1px solid #7f9db9; border-right: 2px solid #7f94b4; background: #fff; }
.root { display: flex; align-items: center; gap: 4px; flex: none; height: 15px; padding-left: 9px; }
.tbox { width: 9px; height: 9px; border: 1px solid #7b93b8; background: linear-gradient(#000, #000) center / 5px 1px no-repeat, linear-gradient(135deg, #fff, #cfd4dc); }
.rootlabel { height: 15px; padding: 0 2px; line-height: 15px; background: #f0eee2; }
.treepane ul { flex: none; margin-left: 32px; background: repeating-linear-gradient(#a8a8a8 0 1px, #fff 1px 2px) 0 0 / 1px 100% no-repeat; }
.treepane li { height: 14px; padding-left: 12px; line-height: 14px; white-space: nowrap; background: repeating-linear-gradient(90deg, #a8a8a8 0 1px, transparent 1px 2px) 1px 50% / 8px 1px no-repeat; }
.hscroll { display: flex; flex: none; height: 17px; margin: 20px 1px 0; background: #f6f5ef; }
.hscroll button { justify-content: center; width: 15px; border: 1px solid #fff; border-radius: 2px; background: linear-gradient(#dbe6fe, #b8ccf8); }
.hscroll svg { width: 10px; height: 10px; }
.thumb { display: flex; justify-content: center; align-items: center; gap: 1px; width: 129px; margin: 0 20px 0 2px; border: 1px solid #a4bbf0; border-radius: 2px; background: linear-gradient(#d2e0ff, #b6cbfa); }
.thumb i { width: 1px; height: 7px; background: #8ea8e4; }
.matpane { flex: 1; min-width: 0; padding: 1px 0 0 1px; background: #fff; }
.mat { width: 669px; }
.mat .sel td:nth-child(2) { background: #dfe8f6; }

.marks { position: absolute; left: 0; top: 0; z-index: 30; pointer-events: none; }
```
